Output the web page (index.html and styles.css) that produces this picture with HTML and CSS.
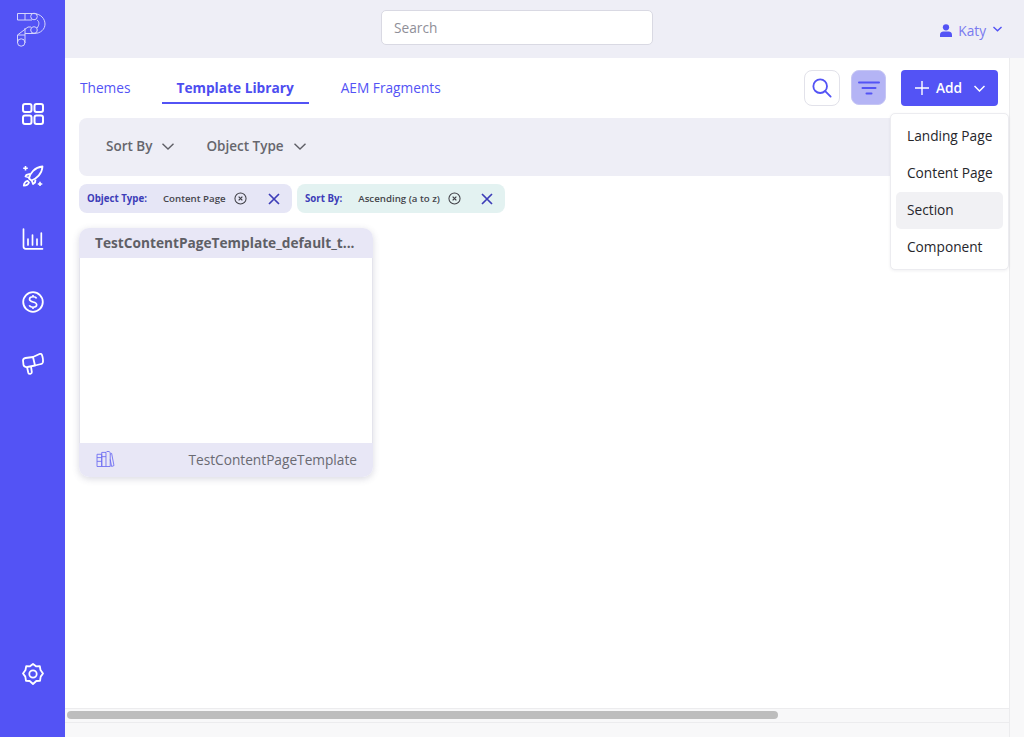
FILE: index.html
```html
<!DOCTYPE html>
<html lang="en">
<head>
<meta charset="utf-8">
<title>Template Library</title>
<link rel="stylesheet" href="styles.css">
</head>
<body>
<div class="app">
  <aside class="sidebar">
    <svg class="logo" width="32" height="36" viewBox="0 0 32 36" fill="none" stroke="#d5d5fb" stroke-width="1">
      <path d="M1.500 2.500H17C25 2.500 29 8 29 13C29 18 25 22.500 18 22.500H9"/>
      <path d="M1.500 2.500V9H16M9 2.500V9"/>
      <circle cx="18" cy="5.500" r="3.300"/>
      <circle cx="18" cy="19" r="3.300"/>
      <path d="M15 16H12L1.500 24V32"/>
      <path d="M9 17V24H1.500M9 24V32"/>
      <circle cx="5.200" cy="31.500" r="3.700"/>
      <path d="M21 9C23.500 10.500 23.500 14 21 17"/>
    </svg>
    <nav class="nav">
      <svg class="nav-icon" viewBox="0 0 22 22" fill="none" stroke="#fff" stroke-width="2"><rect x="1" y="1" width="8.500" height="8" rx="2"/><rect x="12.500" y="1" width="8.500" height="8" rx="2"/><rect x="1" y="12.500" width="8.500" height="8.500" rx="2"/><rect x="12.500" y="12.500" width="8.500" height="8.500" rx="2"/></svg>
      <svg class="nav-icon" viewBox="0 0 22 22" fill="none" stroke="#fff" stroke-width="1.800" stroke-linejoin="round"><path d="M7 13.500C8 8 12.500 2.500 20.500 1.500C20 9 14.500 13.800 9.500 15.500Z"/><path d="M8 9L4.500 9.800L3.500 11.500L7 12.500"/><path d="M13.500 14.500L13 17.500L11 19L9.800 15.500"/><path d="M5.500 15.800C3.500 16.300 2 18.500 1.800 20.700C4 20.500 6.300 19.500 7 17.500Z"/><path d="M3.500 1V5.500M1.200 3.200H5.800M18 16.800V21M15.800 19H20.300" stroke-width="1.600"/></svg>
      <svg class="nav-icon" viewBox="0 0 22 22" fill="none" stroke="#fff" stroke-width="1.700" stroke-linecap="round"><path d="M1.500 1V18.500C1.500 20 2.200 20.800 3.700 20.800H20.500"/><path d="M6 11V17M10.500 7V17M15 11V17M19.300 5V17"/></svg>
      <svg class="nav-icon" viewBox="0 0 22 22" fill="none" stroke="#fff" stroke-width="1.800"><circle cx="11" cy="11" r="9.800"/><path d="M14.500 7.500C14 6 12.500 5.800 11 5.800C9 5.800 7.500 6.600 7.500 8.300C7.500 12 14.700 10 14.700 13.800C14.700 15.400 13 16.200 11 16.200C9.200 16.200 7.800 15.700 7.300 14.300M11 4V5.800M11 16.200V18" stroke-width="1.600"/></svg>
      <svg class="nav-icon" viewBox="0 0 22 22" fill="none" stroke="#fff" stroke-width="1.800" stroke-linejoin="round"><path d="M1 7.500C1 6 2 5.300 3.500 5L11 4L13 12.500L5.500 14C3 14.300 2 13.500 1.500 12Z"/><path d="M11 4L17.500 1C19.300 .3 19.800 1.500 20.300 3C21 5.500 21.300 7.500 20.800 9.500C20.500 10.500 20 11 19 11L13 12.500"/><path d="M5 14L6.300 19.800C7 21.500 10 21 9.800 19L9 13.300"/></svg>
    </nav>
    <svg class="nav-icon gear" viewBox="0 0 22 22" fill="none" stroke="#fff" stroke-width="1.800" stroke-linejoin="round"><path d="M11 1L14 3.300L17.800 3.200L18.500 7L21 10.500L18.700 13.600L18 17.800L14.300 18L11 21L7.700 18L4 17.800L3.300 13.600L1 10.500L3.500 7L4.200 3.200L8 3.300Z"/><circle cx="11" cy="11" r="3.700"/></svg>
  </aside>

  <div class="main">
    <header class="topbar">
      <div class="search-box">Search</div>
      <div class="user">
        <svg width="12" height="13" viewBox="0 0 13 14" fill="#5353f5"><circle cx="6.500" cy="3.500" r="3.400"/><path d="M0 14V11.500C0 9 2 8 3.500 8H9.500C11 8 13 9 13 11.500V14Z"/></svg>
        <span class="user-name">Katy</span>
        <svg class="user-caret" width="9" height="6" viewBox="0 0 10 6" fill="none" stroke="#5353f5" stroke-width="1.600"><path d="M.5 .8L5 5L9.500 .8"/></svg>
      </div>
    </header>

    <div class="body">
      <div class="work">
        <div class="content">
          <div class="toolbar">
            <div class="tabs">
              <span class="tab">Themes</span>
              <span class="tab active">Template Library</span>
              <span class="tab">AEM Fragments</span>
            </div>
            <div class="actions">
              <button class="icon-btn search-btn" aria-label="Search">
                <svg width="20" height="20" viewBox="0 0 22 22" fill="none" stroke="#5353f5" stroke-width="2"><circle cx="9" cy="9" r="7.500"/><path d="M14.500 14.500L20.500 20.500" stroke-linecap="round"/></svg>
              </button>
              <button class="icon-btn filter-btn" aria-label="Filter">
                <svg width="22" height="14" viewBox="0 0 22 14" fill="none" stroke="#5353f5" stroke-width="2" stroke-linecap="round"><path d="M1 1.500H21M4.500 7H17.500M8.500 12.500H13.500"/></svg>
              </button>
              <button class="add-btn">
                <svg width="14" height="14" viewBox="0 0 15 15" fill="none" stroke="#fff" stroke-width="1.500"><path d="M7.500 0V15M0 7.500H15"/></svg>
                <span>Add</span>
                <svg class="add-caret" width="11" height="7" viewBox="0 0 11 7" fill="none" stroke="#fff" stroke-width="1.500"><path d="M.5 1L5.500 6L10.500 1"/></svg>
              </button>
            </div>
          </div>

          <div class="filter-bar">
            <span class="filter">Sort By
              <svg width="12" height="7" viewBox="0 0 12 7" fill="none" stroke="#5f5f66" stroke-width="1.400"><path d="M.5 .8L6 6L11.500 .8"/></svg>
            </span>
            <span class="filter">Object Type
              <svg width="12" height="7" viewBox="0 0 12 7" fill="none" stroke="#5f5f66" stroke-width="1.400"><path d="M.5 .8L6 6L11.500 .8"/></svg>
            </span>
          </div>

          <div class="chips">
            <div class="chip chip-purple">
              <b class="chip-label">Object Type:</b>
              <span class="chip-value">Content Page</span>
              <svg class="chip-x" width="13" height="13" viewBox="0 0 14 14" fill="none" stroke="#3f3f46" stroke-width="1.100"><circle cx="7" cy="7" r="6"/><path d="M5 5L9 9M9 5L5 9" stroke-width="1.300"/></svg>
              <svg class="chip-close" width="12" height="12" viewBox="0 0 12 12" fill="none" stroke="#3d3db8" stroke-width="1.700"><path d="M1 1L11 11M11 1L1 11"/></svg>
            </div>
            <div class="chip chip-teal">
              <b class="chip-label">Sort By:</b>
              <span class="chip-value">Ascending (a to z)</span>
              <svg class="chip-x" width="13" height="13" viewBox="0 0 14 14" fill="none" stroke="#3f3f46" stroke-width="1.100"><circle cx="7" cy="7" r="6"/><path d="M5 5L9 9M9 5L5 9" stroke-width="1.300"/></svg>
              <svg class="chip-close" width="12" height="12" viewBox="0 0 12 12" fill="none" stroke="#3d3db8" stroke-width="1.700"><path d="M1 1L11 11M11 1L1 11"/></svg>
            </div>
          </div>

          <article class="card">
            <div class="card-head">TestContentPageTemplate_default_t...</div>
            <div class="card-preview"></div>
            <div class="card-foot">
              <svg width="19" height="16" viewBox="0 0 19 17" fill="none" stroke="#6a6af2" stroke-width=".9"><path d="M.5 3.500H5.500V16.500H.5ZM5.500 1.500H10V16.500H5.500ZM.5 7H5.500M.5 11H5.500M5.500 6H10M10 1.500L11 .5H13.500L14.500 2V16.500H10M14.500 3.500L16 2.500L18.500 15.500L16 16.500L14.500 9"/></svg>
              <span class="card-name">TestContentPageTemplate</span>
            </div>
          </article>
        </div>
        <div class="scrollbar"><div class="thumb"></div></div>
      </div>
      <div class="gutter"></div>
    </div>

    <ul class="menu">
      <li class="menu-item">Landing Page</li>
      <li class="menu-item">Content Page</li>
      <li class="menu-item current">Section</li>
      <li class="menu-item">Component</li>
    </ul>
  </div>
</div>
</body>
</html>
```
FILE: styles.css
```css
* { box-sizing: border-box; }
html, body { margin: 0; height: 100%; overflow: hidden; }
body { font-family: "Open Sans", "Noto Sans", sans-serif; background: #f8f8f9; }
.app { display: flex; width: 1024px; height: 737px; }

.sidebar { width: 65px; flex: none; background: #5353f5; display: flex; flex-direction: column; align-items: center; }
.logo { margin: 11px 0 0 -1px; }
.nav { display: flex; flex-direction: column; align-items: center; gap: 40.700px; margin-top: 55.500px; }
.nav-icon { width: 22px; height: 22px; display: block; }
.gear { margin: auto 0 52px; }

.main { flex: 1; min-width: 0; display: flex; flex-direction: column; position: relative; }
.topbar { height: 58px; flex: none; background: #eeeef6; display: flex; align-items: flex-start; position: relative; }
.search-box { width: 272px; height: 35px; margin: 10px 0 0 316px; background: #fff; border: 1px solid #d9d9e3; border-radius: 5px; padding: 0 12px; font-size: 13.700px; line-height: 33px; color: #8f8f98; }
.user { margin: 21px 0 0 auto; padding-right: 22px; display: flex; align-items: center; gap: 6px; height: 18px; }
.user-name { font-size: 13.700px; color: #7a7af0; margin-right: 1px; }
.user-caret { margin-top: -3px; }

.body { flex: 1; display: flex; min-height: 0; }
.work { flex: 1; display: flex; flex-direction: column; min-width: 0; margin-bottom: 14px; border-bottom: 1px solid #ececee; }
.content { flex: 1; background: #fff; padding: 12px 0 0 14px; border-bottom: 1px solid #ececee; }
.gutter { width: 15px; flex: none; border-left: 1px solid #ececee; background: #f8f8f9; }
.scrollbar { height: 13px; flex: none; background: #f8f8f9; padding: 2px 0 3px 2px; }
.thumb { width: 711px; height: 8px; border-radius: 4px; background: #bdbdbd; }

.toolbar { display: flex; align-items: flex-start; justify-content: space-between; padding-right: 11px; }
.tabs { display: flex; height: 34px; margin-top: 1px; }
.tab { font-size: 13.700px; color: #5353f5; padding: 0 16px; line-height: 34px; height: 33px; }
.tab:first-child { padding: 0 31px 0 1px; }
.tab.active { font-weight: 700; color: #4d4df0; border-bottom: 2px solid #5353f5; padding: 0 15px; margin-right: 16px; }
.actions { display: flex; align-items: flex-start; gap: 11px; }
.icon-btn { display: flex; align-items: center; justify-content: center; padding: 0; border-radius: 8px; }
.search-btn { width: 36px; height: 36px; background: #fff; border: 1px solid #e2e2ea; }
.filter-btn { width: 35px; height: 35px; background: #b4b4f5; border: 1px solid #c6c6f4; margin-right: 4px; }
.add-btn { width: 97px; height: 36px; background: #5353f5; border: 0; border-radius: 4px; color: #fff; font: 600 13.700px "Open Sans", "Noto Sans", sans-serif; display: flex; align-items: center; padding: 0 0 0 14px; }
.add-btn span { margin: -1px 0 0 7px; }
.add-caret { margin-left: 12px; }

.filter-bar { margin-top: 12px; height: 58px; background: #eeeef6; border-radius: 8px; display: flex; align-items: center; padding: 0 0 2px 27px; gap: 32px; }
.filter { font-size: 13.500px; font-weight: 600; color: #66666d; display: flex; align-items: center; gap: 10px; }

.chips { display: flex; gap: 5px; margin-top: 8px; }
.chip { height: 29px; border-radius: 8px; display: flex; align-items: center; padding-left: 8px; }
.chip-purple { width: 213px; background: #e6e6f6; }
.chip-teal { width: 208px; background: #e3f2f1; }
.chip-label { font-size: 9.700px; font-weight: 700; color: #3d3db8; margin-top: -1px; }
.chip-value { font-size: 9.700px; font-weight: 600; color: #45454c; margin: -1px 0 0 16px; }
.chip-x { margin-left: 8px; }
.chip-close { margin-left: auto; margin-right: 12px; }

.card { width: 294px; margin-top: 15px; border-radius: 10px; box-shadow: 0 2px 7px rgba(70, 70, 110, .2); overflow: hidden; background: #fff; }
.card-head { height: 30px; background: #e8e7f6; padding: 0 16px; font-size: 13.700px; font-weight: 700; line-height: 30px; color: #5f5f66; white-space: nowrap; }
.card-preview { height: 185px; background: #fff; border-left: 1px solid #e4e4ec; border-right: 1px solid #e4e4ec; }
.card-foot { height: 34px; background: #e8e7f6; display: flex; align-items: center; justify-content: space-between; padding: 0 16px 2px 17px; }
.card-name { font-size: 13.700px; color: #6a6a72; }

.menu { position: absolute; top: 113px; left: 825px; width: 119px; height: 157px; margin: 0; padding: 4px 5px; list-style: none; background: #fff; border: 1px solid #ececf0; border-radius: 5px; box-shadow: 0 1px 3px rgba(60, 60, 90, .08); display: flex; flex-direction: column; }
.menu-item { height: 37px; flex: none; border-radius: 5px; padding-left: 11px; font-size: 13.700px; line-height: 36.500px; color: #26262b; }
.menu-item.current { background: #f1f1f4; }
```
